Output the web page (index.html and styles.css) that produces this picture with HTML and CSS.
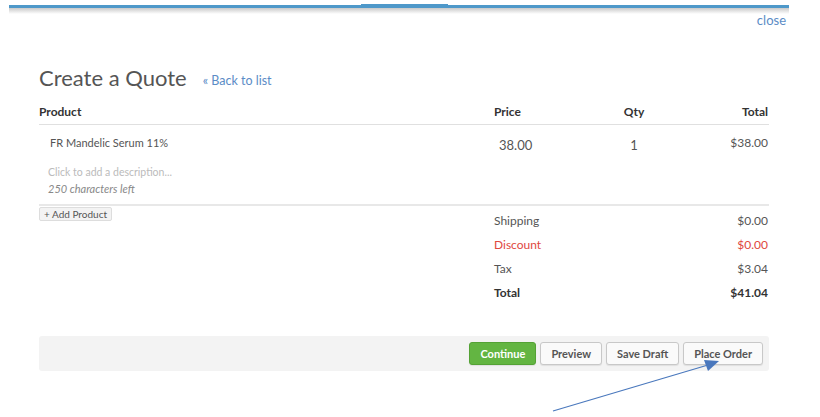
FILE: index.html
```html
<!DOCTYPE html>
<html>
<head>
<meta charset="utf-8">
<link rel="stylesheet" href="styles.css">
</head>
<body>
<div class="topbar">
  <div class="bar"><span class="seg"></span></div>
  <div class="shade"></div>
</div>
<div class="closerow"><a class="close">close</a></div>
<main class="quote">
  <div class="titlerow">
    <h1 class="title">Create a Quote</h1>
    <a class="back">« Back to list</a>
  </div>
  <div class="cols thead">
    <div>Product</div>
    <div>Price</div>
    <div class="c">Qty</div>
    <div class="r">Total</div>
  </div>
  <div class="itemblock">
    <div class="cols item">
      <div class="pname">FR Mandelic Serum 11%</div>
      <div class="num price">38.00</div>
      <div class="num c">1</div>
      <div class="r">$38.00</div>
    </div>
    <div class="desc">Click to add a description...</div>
    <div class="chars">250 characters left</div>
  </div>
  <div class="lower">
    <div class="addcol"><button class="addbtn">+ Add Product</button></div>
    <div class="totals">
      <div class="trow"><span>Shipping</span><span>$0.00</span></div>
      <div class="trow red"><span>Discount</span><span>$0.00</span></div>
      <div class="trow"><span>Tax</span><span>$3.04</span></div>
      <div class="trow bold"><span>Total</span><span>$41.04</span></div>
    </div>
  </div>
  <div class="footer">
    <button class="btn green">Continue</button>
    <button class="btn">Preview</button>
    <button class="btn">Save Draft</button>
    <button class="btn">Place Order</button>
  </div>
</main>
<svg class="arrow" width="820" height="417" viewBox="0 0 820 417">
  <line x1="553" y1="411" x2="708" y2="365" stroke="#4a78bd" stroke-width="1.2"/>
  <polygon points="719,361 704,360 708,371" fill="#4a78bd"/>
</svg>
</body>
</html>
```
FILE: styles.css
```css
* { box-sizing: border-box; }
html, body { margin: 0; padding: 0; background: #fff; }
body {
  width: 820px;
  height: 417px;
  overflow: hidden;
  position: relative;
  font-family: "Lato", "Open Sans", sans-serif;
  color: #555;
  font-size: 12px;
}
.topbar { padding-top: 5px; height: 13px; }
.bar {
  margin: 0 31px 0 9px;
  height: 3px;
  background: #4e98c9;
  position: relative;
}
.seg {
  position: absolute;
  left: 352px;
  width: 87px;
  top: -1px;
  height: 1px;
  background: #4e98c9;
}
.shade {
  margin: 0 31px 0 9px;
  height: 6px;
  background: linear-gradient(#c9c9c9, #ffffff);
}
.closerow {
  height: 15px;
  line-height: 15px;
  text-align: right;
  padding-right: 34px;
}
.close {
  font-size: 13px;
  color: #5b8cc6;
}
.quote {
  margin-left: 39px;
  width: 730px;
}
.titlerow {
  margin-top: 37px;
  display: flex;
  align-items: baseline;
  height: 26px;
}
.title {
  margin: 0;
  font-size: 22px;
  font-weight: 400;
  line-height: 26px;
  color: #555;
}
.back {
  margin-left: 16px;
  font-size: 12.5px;
  color: #5b8cc6;
  position: relative;
  top: -1px;
}
.cols {
  display: grid;
  grid-template-columns: 455px 110px 60px 1fr;
  padding-right: 1px;
}
.c { text-align: center; }
.r { text-align: right; }
.thead {
  margin-top: 13px;
  line-height: 16px;
  padding-bottom: 4px;
  border-bottom: 1px solid #e0e0e0;
  font-weight: 700;
  color: #333;
}
.itemblock {
  padding-bottom: 7px;
  border-bottom: 2px solid #e8e8e8;
}
.item {
  padding-top: 10px;
  line-height: 16px;
}
.pname { padding-left: 11px; font-size: 11px; }
.num { padding-top: 2px; font-size: 13px; }
.price { padding-left: 5px; }
.desc {
  margin-top: 11px;
  padding-left: 9px;
  line-height: 16px;
  font-size: 10.5px;
  color: #bbb;
}
.chars {
  padding-left: 9px;
  line-height: 17px;
  font-size: 11px;
  font-style: italic;
  color: #888;
}
.lower {
  display: flex;
}
.addcol { width: 455px; }
.addbtn {
  margin: 0;
  height: 14px;
  padding: 0 4px;
  font-family: inherit;
  font-size: 10px;
  line-height: 12px;
  color: #555;
  background: #f3f3f3;
  border: 1px solid #ddd;
  border-radius: 2px;
  white-space: nowrap;
}
.totals {
  flex: 1;
  padding-top: 3px;
  padding-right: 1px;
}
.trow {
  display: flex;
  justify-content: space-between;
  line-height: 24px;
  color: #555;
}
.trow.red { color: #e0483e; }
.trow.bold { font-weight: 700; color: #333; }
.footer {
  margin-top: 31px;
  height: 35px;
  background: #f3f3f3;
  border-radius: 3px;
  display: flex;
  justify-content: flex-end;
  align-items: center;
  gap: 4px;
  padding-right: 6px;
}
.btn {
  margin: 0;
  height: 23px;
  padding: 0 10px;
  font-family: inherit;
  font-size: 11px;
  font-weight: 700;
  color: #555;
  background: #fafafa;
  border: 1px solid #c8c8c8;
  border-radius: 3px;
  box-shadow: 0 1px 1px rgba(0,0,0,0.08);
}
.btn.green {
  background: #63b542;
  border-color: #54a235;
  color: #fff;
}
.arrow {
  position: absolute;
  left: 0;
  top: 0;
  pointer-events: none;
}
```
